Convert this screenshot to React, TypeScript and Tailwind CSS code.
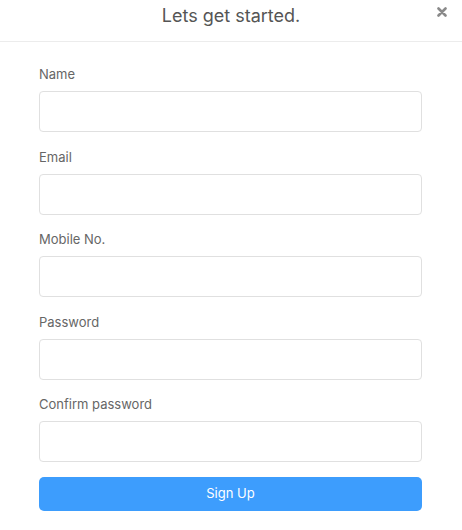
import React from 'react';

const fields = ['Name', 'Email', 'Mobile No.', 'Password', 'Confirm password'];

const App: React.FC = () => {
  return (
    <div className="w-[462px] h-[530px] bg-white font-['Inter','Noto_Sans',sans-serif]">
      {/* header */}
      <div className="relative h-[42px] border-b border-[#ececec] flex items-center justify-center">
        <h1 className="text-[18px] text-[#555555] leading-none pb-[10px]">Lets get started.</h1>
        <button className="absolute right-[15px] top-[7px] text-[#8a8a8a]">
          <svg width="10" height="10" viewBox="0 0 10 10">
            <path d="M1.5 1.5 L8.5 8.5 M8.5 1.5 L1.5 8.5" stroke="currentColor" strokeWidth="2.6" strokeLinecap="round" />
          </svg>
        </button>
      </div>

      {/* form */}
      <form className="pt-[22px] pl-[39px] pr-[40px]">
        {fields.map((f) => (
          <div key={f} className="mb-[14.5px]">
            <label className="block h-[20px] leading-[20px] text-[13px] text-[#666666] mb-[7px]">{f}</label>
            <input
              type={f.toLowerCase().includes('password') ? 'password' : 'text'}
              className="block w-full h-[41px] rounded-[4px] border border-[#e0e0e0] bg-white px-3 outline-none"
            />
          </div>
        ))}
        <button
          type="button"
          className="w-full h-[34px] rounded-[5px] bg-[#3d9dfd] text-white text-[13px]"
        >
          Sign Up
        </button>
      </form>
    </div>
  );
};

export default App;
